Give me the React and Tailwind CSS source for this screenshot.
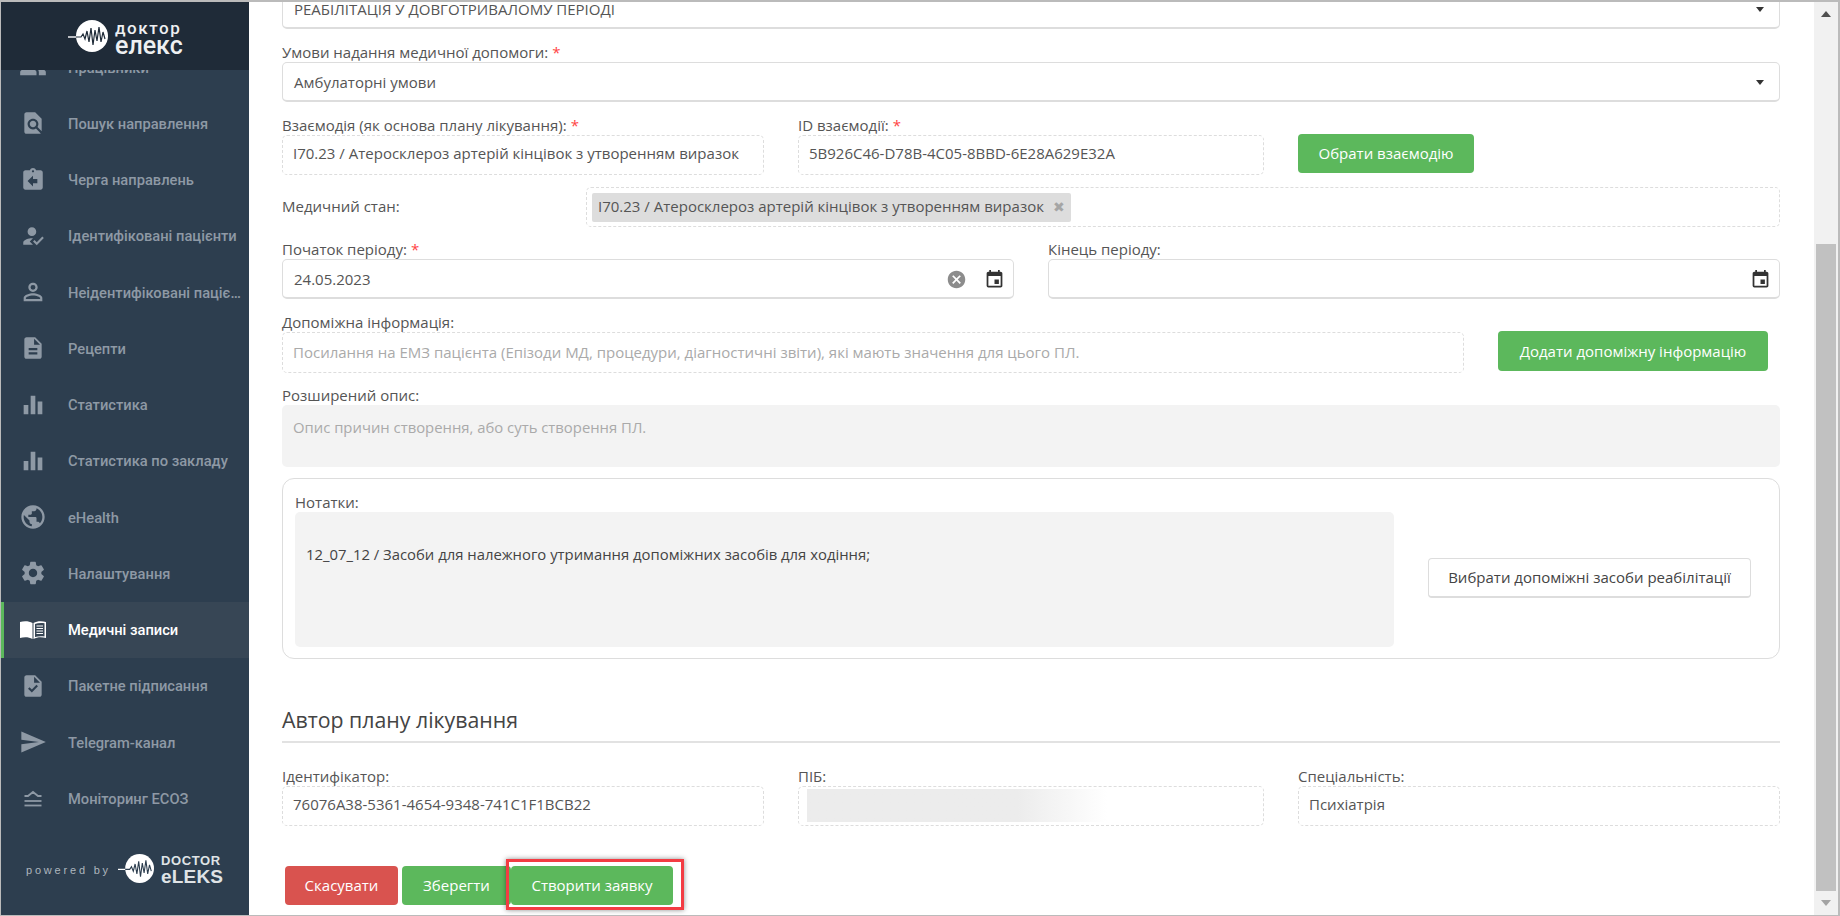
import { MdFindInPage, MdAssignmentReturn, MdHowToReg, MdPersonOutline, MdDescription, MdEqualizer, MdPublic, MdSettings, MdTask, MdSend, MdPeople, MdEvent, MdCancel } from 'react-icons/md'

const WAVE = 'M-24 1 H-11 L-9 -2 L-7 3 L-5 -5 L-3 6 L-1 -8 L1 9 L3 -6 L5 5 L7 -9 L9 6 L11 -4 L13 3'

function LogoMark({ size, tail, stroke }) {
  return (
    <svg width={size + tail} height={size} viewBox="-24 -16 40 32" className="shrink-0" preserveAspectRatio="xMaxYMid meet">
      <circle cx="0" cy="0" r="16" fill="#fff" />
      <path d={WAVE} fill="none" stroke={stroke} strokeWidth="1.2" />
      <path d="M-24 1 H-16" fill="none" stroke="#fff" strokeWidth="1.4" />
    </svg>
  )
}

function EcozIcon() {
  return (
    <svg width="24" height="24" viewBox="0 0 24 24" fill="none" stroke="currentColor" strokeWidth="1.8">
      <path d="M3.500 10 H7 L12 6 L17 10 H20.500" />
      <path d="M3.500 15 H20.500" />
      <path d="M3.500 19.500 H20.500" />
    </svg>
  )
}

function BookIcon() {
  return (
    <svg width="26" height="18" viewBox="0 0 26 18">
      <path d="M0 1 C4 0 9 0 12.5 2 V18 C9 16 4 16 0 17z" fill="#fff" />
      <path d="M13.5 2 C17 0 22 0 26 1 V17 C22 16 17 16 13.5 18z" fill="#fff" />
      <path d="M15 3 C17.5 2 21 1.700 24.500 2.300 V15.500 C21 15 17.500 15.300 15 16z" fill="#374655" />
      <path d="M16.500 5 H23 M16.500 7.500 H23 M16.500 10 H23 M16.500 12.500 H23" stroke="#fff" strokeWidth="1.200" />
    </svg>
  )
}

const navItems = [
  { label: 'Працівники', icon: <MdPeople size={28} /> },
  { label: 'Пошук направлення', icon: <MdFindInPage size={26} /> },
  { label: 'Черга направлень', icon: <MdAssignmentReturn size={26} /> },
  { label: 'Ідентифіковані пацієнти', icon: <MdHowToReg size={26} /> },
  { label: 'Неідентифіковані пацієнти', icon: <MdPersonOutline size={28} /> },
  { label: 'Рецепти', icon: <MdDescription size={26} /> },
  { label: 'Статистика', icon: <MdEqualizer size={28} /> },
  { label: 'Статистика по закладу', icon: <MdEqualizer size={28} /> },
  { label: 'eHealth', icon: <MdPublic size={28} /> },
  { label: 'Налаштування', icon: <MdSettings size={28} /> },
  { label: 'Медичні записи', icon: <BookIcon />, active: true },
  { label: 'Пакетне підписання', icon: <MdTask size={26} /> },
  { label: 'Telegram-канал', icon: <MdSend size={28} /> },
  { label: 'Моніторинг ЕСОЗ', icon: <EcozIcon /> },
]

function Sidebar() {
  return (
    <aside className="w-[248px] shrink-0 h-full flex flex-col bg-[#2d3e4f] font-['Roboto',sans-serif]">
      <div className="relative z-10 h-[68px] shrink-0 bg-[#1f2b38] flex items-center pl-[59px] gap-[7px]">
        <LogoMark size={32} tail={16} stroke="#1f2b38" />
        <div className="flex flex-col text-[#eef0f2] pt-[3px] font-medium">
          <span className="text-[17px] h-[15px] leading-[15px] tracking-[1.6px]">доктор</span>
          <span className="text-[25px] h-[19px] leading-[19px]">елекс</span>
        </div>
      </div>
      <nav className="flex-1 overflow-hidden">
        <ul className="-mt-[31px]">
          {navItems.map(item => (
            <li key={item.label} className={`h-[56.25px] flex items-center text-[14.7px] font-medium ${item.active ? 'bg-[#374655] text-white border-l-[3px] border-[#5cb85c]' : 'text-[#8e99a5] border-l-[3px] border-transparent'}`}>
              <span className="w-[64px] pr-[6px] flex justify-center shrink-0">{item.icon}</span>
              <span className="truncate w-[176px] pt-[1px]">{item.label}</span>
            </li>
          ))}
        </ul>
      </nav>
      <div className="h-[76px] shrink-0 flex items-start pl-[25px] pt-[14px]">
        <span className="text-[11px] leading-[34px] tracking-[2.8px] text-[#aeb6be] font-['Liberation_Sans',sans-serif] w-[92px] shrink-0 whitespace-nowrap">powered by</span>
        <LogoMark size={31} tail={5} stroke="#2d3e4f" />
        <div className="flex flex-col ml-[7px] text-[#dfe3e6] font-['Liberation_Sans',sans-serif] font-bold">
          <span className="text-[13px] leading-[15px] tracking-[0.6px]">DOCTOR</span>
          <span className="text-[19px] leading-[18px] tracking-[0.2px]">eLEKS</span>
        </div>
      </div>
    </aside>
  )
}

function Label({ children, required }) {
  return (
    <label className="block h-5 leading-5 text-[15px] text-[#555] whitespace-nowrap">
      {children}
      {required && <span className="text-[#f44] ml-1">*</span>}
    </label>
  )
}

function Caret() {
  return <span className="w-0 h-0 border-x-[4px] border-x-transparent border-t-[5px] border-t-[#333]" />
}

function Select({ value }) {
  return (
    <div className="h-10 border border-[#ddd] border-b-2 rounded-[5px] flex items-center justify-between pl-[11px] pr-[15px] pt-[1px] text-[15px] text-[#555]">
      <span>{value}</span>
      <Caret />
    </div>
  )
}

function ReadOnly({ value, className = 'pb-[3px]' }) {
  return (
    <div className={`h-10 border border-dashed border-[#ddd] rounded-[5px] flex items-center pl-[10px] text-[15px] text-[#555] whitespace-nowrap ${className}`}>
      {value}
    </div>
  )
}

function DateInput({ value, clear }) {
  return (
    <div className="h-10 border border-[#ddd] border-b-2 rounded-[5px] flex items-center pl-[11px] pr-[8px] pt-[1px] text-[15px] text-[#555]">
      <span className="flex-1">{value}</span>
      {clear && <MdCancel size={21} className="text-[#8c8c8c] mr-[17px]" />}
      <MdEvent size={21} className="text-[#333]" />
    </div>
  )
}

function GreenButton({ children, className = '' }) {
  return (
    <button className={`rounded-[4px] bg-[#5cb85c] text-white text-[15px] flex items-center justify-center whitespace-nowrap ${className}`}>
      {children}
    </button>
  )
}

function Form() {
  return (
    <main className="flex-1 min-w-0 h-full overflow-hidden bg-white pl-[33px] pr-[34px] font-['Open_Sans',sans-serif]">
      <div className="-mt-[13px]">
        <Select value="РЕАБІЛІТАЦІЯ У ДОВГОТРИВАЛОМУ ПЕРІОДІ" />

        <div className="mt-[13px]">
          <Label required>Умови надання медичної допомоги:</Label>
          <Select value="Амбулаторні умови" />
        </div>

        <div className="mt-[13px] grid grid-cols-[482px_466px_176px] gap-x-[34px] items-end">
          <div>
            <Label required>Взаємодія (як основа плану лікування):</Label>
            <ReadOnly value="I70.23 / Атеросклероз артерій кінцівок з утворенням виразок" />
          </div>
          <div>
            <Label required>ID взаємодії:</Label>
            <ReadOnly value="5B926C46-D78B-4C05-8BBD-6E28A629E32A" />
          </div>
          <GreenButton className="h-[39px] mb-[2px]">Обрати взаємодію</GreenButton>
        </div>

        <div className="mt-[12px] flex items-center">
          <span className="w-[304px] shrink-0 pb-[2px] text-[15px] text-[#555]">Медичний стан:</span>
          <div className="flex-1 h-10 border border-dashed border-[#ddd] rounded-[5px] flex items-center pl-[5px]">
            <span className="h-[29px] w-[479px] bg-[#ddd] rounded-[2px] flex items-center justify-between pl-[6px] pr-[6px] pb-[1px] text-[15px] text-[#555] whitespace-nowrap">
              I70.23 / Атеросклероз артерій кінцівок з утворенням виразок
              <span className="text-[#a5a5a5] text-sm">✖</span>
            </span>
          </div>
        </div>

        <div className="mt-[12px] grid grid-cols-[732px_732px] gap-x-[34px]">
          <div>
            <Label required>Початок періоду:</Label>
            <DateInput value="24.05.2023" clear />
          </div>
          <div>
            <Label>Кінець періоду:</Label>
            <DateInput />
          </div>
        </div>

        <div className="mt-[13px]">
          <Label>Допоміжна інформація:</Label>
          <div className="flex items-start gap-[34px]">
            <ReadOnly className="w-[1182px] h-[41px] text-[14.85px] text-[#aaa]" value="Посилання на ЕМЗ пацієнта (Епізоди МД, процедури, діагностичні звіти), які мають значення для цього ПЛ." />
            <GreenButton className="w-[270px] h-10 -mt-[1px]">Додати допоміжну інформацію</GreenButton>
          </div>
        </div>

        <div className="mt-[12px]">
          <Label>Розширений опис:</Label>
          <div className="h-[62px] bg-[#f3f3f3] rounded-[5px] pl-[11px] pt-[12px] leading-5 text-[14.85px] text-[#aaa]">
            Опис причин створення, або суть створення ПЛ.
          </div>
        </div>

        <div className="mt-[11px] h-[181px] border border-[#ddd] rounded-xl pl-[12px] pt-[13px] flex items-start">
          <div className="w-[1099px] shrink-0">
            <Label>Нотатки:</Label>
            <div className="h-[135px] bg-[#f3f3f3] rounded-[5px] pl-[11px] pt-[32px] leading-5 text-[14.85px] text-[#444]">
              12_07_12 / Засоби для належного утримання допоміжних засобів для ходіння;
            </div>
          </div>
          <button className="ml-[34px] mt-[66px] w-[323px] h-10 border border-[#ddd] border-b-2 rounded-[4px] bg-white text-[15px] text-[#444] whitespace-nowrap">
            Вибрати допоміжні засоби реабілітації
          </button>
        </div>

        <h3 className="mt-[47px] pb-[7px] border-b-2 border-[#e2e2e2] text-[21.3px] leading-7 text-[#444]">Автор плану лікування</h3>

        <div className="mt-[23px] grid grid-cols-[482px_466px_482px] gap-x-[34px]">
          <div>
            <Label>Ідентифікатор:</Label>
            <ReadOnly value="76076A38-5361-4654-9348-741C1F1BCB22" />
          </div>
          <div>
            <Label>ПІБ:</Label>
            <div className="h-10 border border-dashed border-[#ddd] rounded-[5px] pl-[8px] py-[2px]">
              <div className="h-[33px] w-[300px] bg-gradient-to-r from-[#ececec] from-70% to-white" />
            </div>
          </div>
          <div>
            <Label>Спеціальність:</Label>
            <ReadOnly value="Психіатрія" />
          </div>
        </div>

        <div className="mt-[40px] ml-[3px] flex items-start">
          <button className="w-[113px] h-[39px] rounded-[4px] bg-[#d9534f] text-white text-[15px]">Скасувати</button>
          <GreenButton className="ml-[4px] w-[109px] h-[39px]">Зберегти</GreenButton>
          <div className="relative">
            <GreenButton className="w-[162px] h-[39px]">Створити заявку</GreenButton>
            <div className="absolute -left-[5px] -right-[11px] -top-[7px] -bottom-[5px] border-[3px] border-[#f33c43] shadow-[0_0_5px_rgba(0,0,0,0.45)]" />
          </div>
        </div>
      </div>
    </main>
  )
}

function Scrollbar() {
  return (
    <div className="w-6 shrink-0 h-full bg-[#f1f1f1] flex flex-col items-stretch">
      <div className="h-6 flex items-center justify-center">
        <span className="w-0 h-0 border-x-[5px] border-x-transparent border-b-[6px] border-b-[#505050]" />
      </div>
      <div className="flex-1" />
      <div className="h-[647px] mx-[2px] bg-[#c1c1c1]" />
      <div className="h-6 flex items-center justify-center">
        <span className="w-0 h-0 border-x-[5px] border-x-transparent border-t-[6px] border-t-[#a3a3a3]" />
      </div>
    </div>
  )
}

export default function App() {
  return (
    <div className="w-[1840px] h-[916px] overflow-hidden flex border-t-2 border-l border-r-2 border-b border-[#bbb] bg-white">
      <Sidebar />
      <Form />
      <Scrollbar />
    </div>
  )
}
